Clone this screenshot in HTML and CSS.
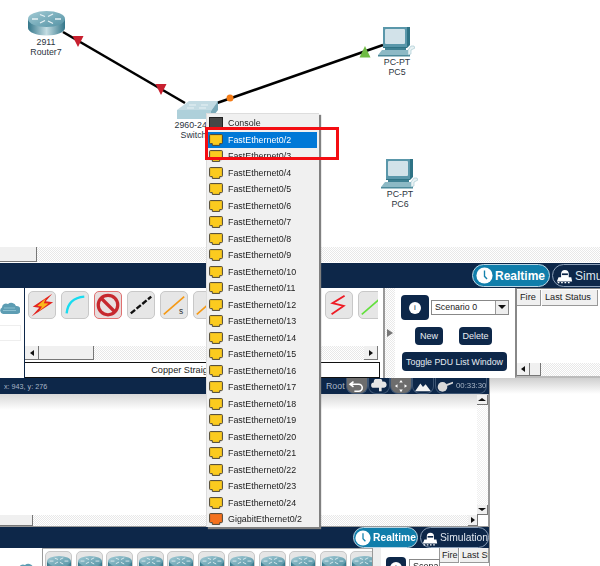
FILE: index.html
```html
<!DOCTYPE html>
<html lang="en">
<head>
<meta charset="utf-8">
<title>Packet Tracer</title>
<link rel="stylesheet" href="styles.css">
</head>
<body>
<svg class="defs" aria-hidden="true">
  <defs>
    <linearGradient id="cyl" x1="0" x2="1" y1="0" y2="0">
      <stop offset="0" stop-color="#33768a"/><stop offset=".5" stop-color="#c4dde3"/><stop offset="1" stop-color="#33768a"/>
    </linearGradient>
    <linearGradient id="disc" x1="0" x2="1" y1="0" y2="1">
      <stop offset="0" stop-color="#a3cbd5"/><stop offset="1" stop-color="#5392a4"/>
    </linearGradient>
  </defs>
  <symbol id="router" viewBox="0 0 37 25">
    <path d="M0 8v9c0 4 8 7.500 18.500 7.500S37 21 37 17V8z" fill="url(#cyl)"/>
    <ellipse cx="18.500" cy="8" rx="18.500" ry="8" fill="url(#disc)"/>
    <path d="M12 3.500l5 2M25 3l-5 2.500M12 12l5-2.500M25 12.500l-5-2.500M4 8h6M27 8h6" stroke="#e6f1f4" stroke-width="1.300" fill="none"/>
  </symbol>
  <symbol id="pc" viewBox="0 0 37 30">
    <path d="M5 0h24l3-2v20l-3 3H5z" fill="#2f7385"/>
    <path d="M30 0l2-2H8L5 0z" fill="#7fb0bd"/>
    <rect x="5" y="0" width="24" height="20" fill="#5a97aa"/>
    <rect x="7" y="2" width="20" height="15" rx="1" fill="#d2e2e9"/>
    <path d="M7 21h21v2H7z" fill="#3f8092"/>
    <path d="M4 23h26l2 5H0z" fill="#8db9c5"/>
    <path d="M0 28h32v1.500H0z" fill="#4d8a9b"/>
    <path d="M30 23l3-4 3 0 1 2-4 2 0 4-3 1z" fill="#e9f2f4" stroke="#8db9c5" stroke-width=".5"/>
  </symbol>
  <symbol id="port" viewBox="0 0 14 12">
    <path d="M.6 1.400a.8.800 0 0 1 .8-.8h11.200a.8.800 0 0 1 .8.800v7.400a.8.800 0 0 1-.8.800h-1.900v1.800H3.300V9.600H1.400a.8.800 0 0 1-.8-.8z" fill="currentColor" stroke="#4a4436" stroke-width="1"/>
  </symbol>
  <symbol id="clock" viewBox="0 0 20 20">
    <circle cx="10" cy="10" r="9.500" fill="#fff"/>
    <path d="M10 4v7l3 3" stroke="#1482ad" stroke-width="1.600" fill="none"/>
  </symbol>
  <symbol id="runner" viewBox="0 0 20 20">
    <path d="M6 8a4.500 4.500 0 0 1 9 0v4h3l1 5H1l2-5h3z" fill="#fff"/>
    <path d="M7 8.500h7" stroke="#0d2749" stroke-width="2"/>
    <path d="M2 18.500h2M6 18.500h2M10 18.500h2M14 18.500h2" stroke="#fff" stroke-width="1.500"/>
  </symbol>
  <symbol id="cloud" viewBox="0 0 20 15">
    <path d="M3 13a3.500 3.500 0 0 1-1-6.500A4 4 0 0 1 8 3a5 5 0 0 1 8 2 4 4 0 0 1 1 8z" fill="#5d9db3"/>
    <path d="M4 7h11M3 9.500h13" stroke="#8cc0d0" stroke-width="1"/>
  </symbol>
</svg>

<main class="stage">

  <section class="canvas">
    <svg class="links" viewBox="0 0 600 263" width="600" height="263" aria-hidden="true">
      <path d="M63 32L185 103" stroke="#000" stroke-width="2.600"/>
      <path d="M217 103L383 45" stroke="#000" stroke-width="2.600"/>
      <path d="M72.500 36h11l-5.500 11zM155.500 84h11l-5.500 11z" fill="#c8202f"/>
      <circle cx="230" cy="98" r="3.500" fill="#f47b16"/>
      <path d="M365 46l5.500 11.500h-11z" fill="#6fbb44"/>
    </svg>

    <figure class="node node-router">
      <svg class="icon-router" aria-hidden="true"><use href="#router"/></svg>
      <figcaption>2911<br>Router7</figcaption>
    </figure>
    <figure class="node node-switch">
      <svg class="icon-switch" viewBox="0 0 41 19" aria-hidden="true">
        <path d="M0 10L12 1h29l-7 10z" fill="#c3dbe3"/>
        <path d="M0 10h34v9H0z" fill="#aed0da"/>
        <path d="M34 11l7-10v9l-7 9z" fill="#7aa9b8"/>
        <path d="M12 5h7M24 5h7M10 8h7M22 8h7" stroke="#e8f2f5" stroke-width="1"/>
      </svg>
      <figcaption>2960-24TT<br>Switch0</figcaption>
    </figure>
    <figure class="node node-pc5">
      <svg class="icon-pc" aria-hidden="true"><use href="#pc"/></svg>
      <figcaption>PC-PT<br>PC5</figcaption>
    </figure>
    <figure class="node node-pc6">
      <svg class="icon-pc" aria-hidden="true"><use href="#pc"/></svg>
      <figcaption>PC-PT<br>PC6</figcaption>
    </figure>

    <div class="hscroll hscroll-top"><span class="thumb thumb-top"></span></div>
  </section>

  <header class="bar bar-top">
    <button class="pill pill-rt"><svg class="pill-icon" aria-hidden="true"><use href="#clock"/></svg>Realtime</button>
    <button class="pill pill-sim"><svg class="pill-icon" aria-hidden="true"><use href="#runner"/></svg>Simulation</button>
  </header>

  <section class="panels">
    <div class="types">
      <svg class="type-cloud" aria-hidden="true"><use href="#cloud"/></svg>
      <div class="type-box"></div>
    </div>
    <div class="picker">
      <div class="tools">
        <span class="tool"><svg viewBox="0 0 28 28"><path d="M25 2L4 16l7 1-8 9 23-15-8-1z" fill="#e3231f"/><path d="M18 7l-9 8 5 .5-3 5 10-8-5-.5z" fill="#fbb81c"/></svg></span>
        <span class="tool"><svg viewBox="0 0 28 28"><path d="M5 23C6 12 12 6 24 5" stroke="#18dcf0" stroke-width="2.600" fill="none"/></svg></span>
        <span class="tool tool-on"><svg viewBox="0 0 28 28"><circle cx="14" cy="14" r="10.500" fill="#e8e0e0" stroke="#c7282e" stroke-width="3.500"/><path d="M7 7l14 14" stroke="#c7282e" stroke-width="3.500"/></svg></span>
        <span class="tool"><svg viewBox="0 0 28 28"><path d="M3 23L25 5" stroke="#111" stroke-width="2.600" stroke-dasharray="6 2"/></svg></span>
        <span class="tool"><svg viewBox="0 0 28 28"><path d="M3 24L25 5" stroke="#f59a16" stroke-width="1.800"/><text class="tool-s" x="19.500" y="24">s</text></svg></span>
        <span class="tool"><svg viewBox="0 0 28 28"><path d="M3 24L25 5" stroke="#f59a16" stroke-width="1.800"/></svg></span>
        <span class="tool"></span>
        <span class="tool"></span>
        <span class="tool"></span>
        <span class="tool"><svg viewBox="0 0 28 28"><path d="M20 4L7 12l12 3-13 9" stroke="#ee1c25" stroke-width="2" fill="none"/></svg></span>
        <span class="tool"><svg viewBox="0 0 28 28"><path d="M3 24L25 5" stroke="#62e03c" stroke-width="1.800"/></svg></span>
      </div>
      <div class="hscroll hscroll-tools">
        <span class="arrow arrow-left"></span>
        <span class="thumb thumb-tools"></span>
        <span class="arrow arrow-right arrow-end"></span>
      </div>
      <div class="tool-name">Copper Straight-Through</div>
    </div>
    <div class="collapse"><span class="collapse-tri"></span></div>
    <div class="scenario">
      <div class="scenario-top">
        <span class="info"><i>i</i></span>
        <span class="select">Scenario 0<span class="select-btn"></span></span>
      </div>
      <div class="scenario-btns">
        <button class="navy-btn btn-new">New</button>
        <button class="navy-btn btn-del">Delete</button>
      </div>
      <button class="navy-btn btn-toggle">Toggle PDU List Window</button>
    </div>
    <div class="pdu">
      <div class="pdu-head"><span class="th th-fire">Fire</span><span class="th th-status">Last Status</span></div>
      <div class="hscroll hscroll-pdu"><span class="arrow arrow-left"></span><span class="thumb thumb-pdu"></span></div>
    </div>
  </section>

  <div class="status-row">
    <footer class="status">
      <span class="coords">x: 943, y: 276</span>
      <span class="root">Root</span>
      <span class="st-btn st-grey"><svg viewBox="0 0 22 16"><path d="M7 3L3 6l4 3M3 6h10a3.500 3.500 0 0 1 0 8H8" stroke="#fff" stroke-width="1.800" fill="none"/></svg></span>
      <span class="st-btn"><svg viewBox="0 0 22 16"><path d="M5 10a3 3 0 0 1 0-6 5 5 0 0 1 10-1 3.500 3.500 0 0 1 2 7h-3v4h-3v-4z" fill="#e6e6e6"/></svg></span>
      <span class="st-btn st-grey"><svg viewBox="0 0 22 16"><path d="M11 1l2 3H9zM11 15l-2-3h4zM4 8l3-2v4zM18 8l-3 2V6z" fill="#fff"/></svg></span>
      <span class="st-btn"><svg viewBox="0 0 22 16"><path d="M2 14l6-9 3 4 3-3 6 8z" fill="#f2f2f2"/></svg></span>
      <span class="st-btn st-clock"><svg class="st-bulb" viewBox="0 0 20 16"><circle cx="6" cy="9" r="5.500" fill="#d9d9d9"/><path d="M10 6l8-3v2l-7 3z" fill="#d9d9d9"/></svg>00:33:30</span>
    </footer>
    <div class="shade"></div>
  </div>

  <section class="canvas2">
    <div class="canvas2-main">
      <div class="vscroll"><span class="arrow-box arrow-up"></span><span class="arrow-box arrow-down"></span></div>
    </div>
    <div class="hscroll hscroll-low"><span class="thumb thumb-low"></span><span class="arrow arrow-right arrow-low"></span></div>
  </section>

  <header class="bar bar-low">
    <button class="pill pill-rt pill-small"><svg class="pill-icon" aria-hidden="true"><use href="#clock"/></svg>Realtime</button>
    <button class="pill pill-sim pill-small"><svg class="pill-icon" aria-hidden="true"><use href="#runner"/></svg>Simulation</button>
  </header>

  <section class="panels-low">
    <div class="types-low">
      <svg class="type-cloud-low" aria-hidden="true"><use href="#cloud"/></svg>
    </div>
    <div class="devices">
      <span class="device"><svg aria-hidden="true"><use href="#router"/></svg></span>
      <span class="device"><svg aria-hidden="true"><use href="#router"/></svg></span>
      <span class="device"><svg aria-hidden="true"><use href="#router"/></svg></span>
      <span class="device"><svg aria-hidden="true"><use href="#router"/></svg></span>
      <span class="device"><svg aria-hidden="true"><use href="#router"/></svg></span>
      <span class="device"><svg aria-hidden="true"><use href="#router"/></svg></span>
      <span class="device"><svg aria-hidden="true"><use href="#router"/></svg></span>
      <span class="device"><svg aria-hidden="true"><use href="#router"/></svg></span>
      <span class="device"><svg aria-hidden="true"><use href="#router"/></svg></span>
      <span class="device"><svg aria-hidden="true"><use href="#router"/></svg></span>
      <span class="device"><svg aria-hidden="true"><use href="#router"/></svg></span>
    </div>
    <div class="collapse-low"></div>
    <div class="scenario-low">
      <span class="info info-low"><i>i</i></span>
      <span class="select select-low">Scenario 0</span>
    </div>
    <div class="pdu-low"><span class="th th-fire-low">Fire</span><span class="th th-status-low">Last Status</span></div>
    <div class="low-rest"></div>
  </section>

  <nav class="menu">
    <div class="item"><span class="console"></span>Console</div>
    <div class="item item-on"><svg class="port" aria-hidden="true"><use href="#port"/></svg>FastEthernet0/2</div>
    <div class="item"><svg class="port" aria-hidden="true"><use href="#port"/></svg>FastEthernet0/3</div>
    <div class="item"><svg class="port" aria-hidden="true"><use href="#port"/></svg>FastEthernet0/4</div>
    <div class="item"><svg class="port" aria-hidden="true"><use href="#port"/></svg>FastEthernet0/5</div>
    <div class="item"><svg class="port" aria-hidden="true"><use href="#port"/></svg>FastEthernet0/6</div>
    <div class="item"><svg class="port" aria-hidden="true"><use href="#port"/></svg>FastEthernet0/7</div>
    <div class="item"><svg class="port" aria-hidden="true"><use href="#port"/></svg>FastEthernet0/8</div>
    <div class="item"><svg class="port" aria-hidden="true"><use href="#port"/></svg>FastEthernet0/9</div>
    <div class="item"><svg class="port" aria-hidden="true"><use href="#port"/></svg>FastEthernet0/10</div>
    <div class="item"><svg class="port" aria-hidden="true"><use href="#port"/></svg>FastEthernet0/11</div>
    <div class="item"><svg class="port" aria-hidden="true"><use href="#port"/></svg>FastEthernet0/12</div>
    <div class="item"><svg class="port" aria-hidden="true"><use href="#port"/></svg>FastEthernet0/13</div>
    <div class="item"><svg class="port" aria-hidden="true"><use href="#port"/></svg>FastEthernet0/14</div>
    <div class="item"><svg class="port" aria-hidden="true"><use href="#port"/></svg>FastEthernet0/15</div>
    <div class="item"><svg class="port" aria-hidden="true"><use href="#port"/></svg>FastEthernet0/16</div>
    <div class="item"><svg class="port" aria-hidden="true"><use href="#port"/></svg>FastEthernet0/17</div>
    <div class="item"><svg class="port" aria-hidden="true"><use href="#port"/></svg>FastEthernet0/18</div>
    <div class="item"><svg class="port" aria-hidden="true"><use href="#port"/></svg>FastEthernet0/19</div>
    <div class="item"><svg class="port" aria-hidden="true"><use href="#port"/></svg>FastEthernet0/20</div>
    <div class="item"><svg class="port" aria-hidden="true"><use href="#port"/></svg>FastEthernet0/21</div>
    <div class="item"><svg class="port" aria-hidden="true"><use href="#port"/></svg>FastEthernet0/22</div>
    <div class="item"><svg class="port" aria-hidden="true"><use href="#port"/></svg>FastEthernet0/23</div>
    <div class="item"><svg class="port" aria-hidden="true"><use href="#port"/></svg>FastEthernet0/24</div>
    <div class="item"><svg class="port port-giga" aria-hidden="true"><use href="#port"/></svg>GigabitEthernet0/2</div>
  </nav>

  <div class="callout"></div>
</main>
</body>
</html>
```
FILE: styles.css
```css
* { box-sizing: border-box; }
html, body { margin: 0; padding: 0; background: #fff; }
body { width: 600px; height: 566px; overflow: hidden; font-family: "Liberation Sans", Arial, sans-serif; color: #222; }
.defs { position: absolute; width: 0; height: 0; }
button { font-family: inherit; border: 0; padding: 0; cursor: default; }

.stage {
  position: relative;
  width: 600px;
  height: 566px;
  overflow: hidden;
  display: grid;
  grid-template-rows: 263px 25px 90px 16px 133px 21px 18px;
  filter: blur(.4px);
}

/* top canvas */
.canvas { position: relative; display: flex; flex-direction: column; justify-content: flex-end; padding-bottom: 1px; background: #fff; }
.links { position: absolute; left: 0; top: 0; }
.node { position: absolute; margin: 0; display: flex; flex-direction: column; align-items: center; width: 60px; }
.node figcaption { font-size: 8.800px; line-height: 10px; text-align: center; color: #2b3440; white-space: nowrap; }
.node-router { left: 16px; top: 11px; }
.icon-router { width: 37px; height: 25px; margin-bottom: 1px; }
.node-switch { left: 166px; top: 100px; }
.icon-switch { width: 41px; height: 19px; margin-left: 3px; margin-bottom: 1px; }
.node-pc5 { left: 367px; top: 27px; }
.node-pc6 { left: 370px; top: 159px; }
.icon-pc { width: 37px; height: 30px; margin-left: -2px; overflow: visible; }

/* scrollbars */
.hscroll {
  display: flex;
  align-items: stretch;
  background: repeating-conic-gradient(#e8e8e8 0 25%, #fff 0 50%) 0 0 / 2px 2px;
}
.hscroll-top { height: 15px; }
.thumb { display: block; background: #f0f0f0; border-right: 1px solid #777; border-bottom: 1px solid #777; }
.thumb-top { width: 37px; }
.arrow { position: relative; display: block; width: 13px; background: #f0f0f0; border-right: 1px solid #777; border-bottom: 1px solid #777; }
.arrow-left::after, .arrow-right::after {
  content: ""; position: absolute; top: 50%; left: 50%; margin: -3px 0 0 -2px;
  border-top: 3px solid transparent; border-bottom: 3px solid transparent;
}
.arrow-left::after { border-right: 4px solid #111; }
.arrow-right::after { border-left: 4px solid #111; }
.arrow-end { margin-left: auto; }

/* navy bars */
.bar { display: flex; align-items: center; background: #0d2749; }
.bar-top { padding-left: 472px; gap: 2px; width: 640px; }
.bar-low { width: 490px; padding-left: 353px; gap: 2px; border-right: 1px solid #999; }
.pill {
  flex: none;
  display: flex;
  align-items: center;
  gap: 2px;
  height: 23px;
  border-radius: 12px;
  padding-left: 3px;
  color: #fff;
  font-size: 12px;
  white-space: nowrap;
}
.pill-rt { width: 78px; background: #107eab; border: 1px solid #bcd6e4; font-weight: bold; }
.pill-sim { width: 110px; background: #0d2749; border: 1px solid #8ca0b8; color: #dfe6ee; }
.pill-icon { width: 17px; height: 17px; flex: none; }
.pill-small { font-size: 10.300px; height: 21px; gap: 2px; padding-left: 1px; }
.pill-small.pill-rt { width: 65px; }
.pill-small.pill-sim { width: 69px; }
.pill-small .pill-icon { width: 16px; height: 16px; }

/* panels */
.panels { display: flex; background: #fff; }
.types { position: relative; flex: none; width: 24px; padding-top: 13px; }
.type-cloud { display: block; width: 20px; height: 15px; }
.type-box { height: 16px; margin-top: 9px; margin-right: 3px; border: 1px solid #eee; border-left: 0; }
.picker { flex: none; width: 359px; display: flex; flex-direction: column; border-left: 1px solid #0d2749; }
.tools { flex: none; height: 58px; margin-right: 5px; padding: 3px 0 0 3px; display: flex; gap: 5px; overflow: hidden; }
.tool { flex: none; display: block; width: 28px; height: 28px; border-radius: 5px; background: #e6e6e6; border: 1px solid #c8c8c8; }
.tool svg { display: block; width: 26px; height: 26px; }
.tool-on { border-color: #e07070; background: #e8dcdc; }
.tool-s { font-size: 9px; fill: #333; }
.hscroll-tools { height: 14px; margin-right: 5px; }
.hscroll-tools .arrow { width: 14px; }
.thumb-tools { width: 55px; }
.tool-name {
  height: 16px; margin: 2px 3px 0 0; border: 1px solid #111; border-width: 1px 1px 1px 0;
  font-size: 9.200px; line-height: 14px; text-align: center; color: #222; white-space: nowrap; overflow: hidden;
}
.collapse { flex: none; width: 12px; display: flex; align-items: center; padding-left: 2px; background: repeating-conic-gradient(#e9e9e9 0 25%, #fff 0 50%) 0 0 / 2px 2px; border-left: 2px solid #999; }
.collapse-tri { display: block; border-top: 4px solid transparent; border-bottom: 4px solid transparent; border-left: 6px solid #777; }
.scenario { flex: none; width: 120px; display: flex; flex-direction: column; padding: 7px 0 0 6px; }
.scenario-top { display: flex; align-items: center; gap: 2px; height: 25px; }
.info { flex: none; display: flex; align-items: center; justify-content: center; width: 28px; height: 25px; background: #0d2749; border-radius: 4px; }
.info i { display: block; width: 12px; height: 12px; border-radius: 50%; background: #fff; color: #0d2749; font-size: 8px; font-style: normal; line-height: 12px; text-align: center; }
.select { position: relative; display: block; width: 78px; height: 15px; padding-left: 3px; border: 1px solid #888; font-size: 8.800px; line-height: 13px; color: #222; white-space: nowrap; }
.select-btn { position: absolute; right: 0; top: 0; width: 13px; height: 13px; background: #eee; border-left: 1px solid #999; }
.select-btn::after { content: ""; position: absolute; left: 2px; top: 4px; border-left: 4px solid transparent; border-right: 4px solid transparent; border-top: 4px solid #111; }
.scenario-btns { display: flex; gap: 16px; padding-left: 14px; margin-top: 7px; }
.navy-btn { height: 18px; border-radius: 4px; background: #0d2749; color: #e8edf3; font-size: 9px; white-space: nowrap; }
.btn-new { width: 28px; }
.btn-del { width: 33px; }
.btn-toggle { width: 105px; height: 19px; margin: 7px 0 0 1px; font-size: 8.800px; }
.pdu { flex: 1; display: flex; flex-direction: column; justify-content: space-between; border-left: 2px solid #888; border-top: 1px solid #888; border-bottom: 2px solid #bbb; background: #fff; padding-top: 1px; }
.pdu-head { display: flex; gap: 1px; }
.th { display: block; height: 16px; background: #f0f0f0; border-right: 1px solid #999; border-bottom: 1px solid #999; font-size: 9.200px; line-height: 15px; padding-left: 3px; white-space: nowrap; overflow: hidden; }
.th-fire { width: 24px; }
.th-status { width: 56px; }
.hscroll-pdu { height: 13px; }
.thumb-pdu { width: 11px; }

/* status */
.status-row { display: flex; }
.status { flex: none; width: 490px; display: flex; align-items: center; background: #0d2749; padding-left: 4px; color: #a9b6c6; font-size: 8.800px; border-right: 1px solid #999; }
.coords { width: 322px; white-space: nowrap; font-size: 7.200px; }
.root { width: 20px; }
.st-btn { flex: none; display: flex; align-items: center; justify-content: center; width: 22px; height: 16px; border-radius: 0 0 8px 8px; border: 1px solid #3d5573; border-top: 0; }
.st-btn svg { width: 20px; height: 14px; }
.st-grey { background: #6d6d6d; }
.st-clock { width: 52px; margin-left: 1px; justify-content: flex-start; gap: 0; font-size: 7.800px; }
.st-clock svg.st-bulb { width: 20px; flex: none; }
.shade { flex: 1; background: linear-gradient(#cfcfcf, #fff); }

/* lower window */
.canvas2 { width: 490px; display: flex; flex-direction: column; border-right: 2px solid #999; border-bottom: 1px solid #999; background: linear-gradient(#d8d8d8, #fff 16px); }
.canvas2-main { flex: 1; display: flex; justify-content: flex-end; padding-top: 1px; }
.vscroll { width: 11px; display: flex; flex-direction: column; justify-content: space-between; background: repeating-conic-gradient(#f0f0f0 0 25%, #fff 0 50%) 0 0 / 2px 2px; }
.arrow-box { position: relative; display: block; height: 10px; background: #f0f0f0; border-right: 1px solid #777; border-bottom: 1px solid #777; }
.arrow-box::after { content: ""; position: absolute; left: 1px; top: 3px; border-left: 4px solid transparent; border-right: 4px solid transparent; }
.arrow-up::after { border-bottom: 3px solid #111; }
.arrow-down::after { border-top: 3px solid #111; }
.hscroll-low { flex: none; height: 11px; margin-right: 10px; }
.thumb-low { width: 33px; }
.arrow-low { width: 10px; margin-left: auto; }

.panels-low { display: flex; background: #fff; width: 490px; overflow: hidden; border-right: 1px solid #999; }
.types-low { flex: none; width: 42px; padding: 14px 0 0 17px; }
.type-cloud-low { display: block; width: 20px; height: 15px; }
.devices { flex: none; width: 330px; display: flex; gap: 3.500px; padding: 2px 0 0 2px; overflow: hidden; border-left: 1px solid #999; border-top: 1px solid #aaa; }
.device { flex: none; display: block; width: 27px; height: 28px; padding: 3px 1px; border-radius: 5px; background: #e6e6e6; border: 1px solid #c8c8c8; }
.device svg { display: block; width: 24px; height: 18px; }
.collapse-low { flex: none; width: 9px; background: #eee; border-left: 1px solid #999; }
.scenario-low { flex: none; width: 59px; display: flex; gap: 3px; padding: 9px 0 0 5px; }
.info-low { width: 20px; height: 22px; }
.select-low { width: 40px; overflow: hidden; font-size: 9px; margin-top: 2px; }
.pdu-low { flex: none; width: 50px; display: flex; gap: 1px; margin-left: -1px; }
.th-fire-low { width: 20px; height: 15px; padding-left: 2px; font-size: 9px; border-left: 1px solid #999; }
.th-status-low { width: 29px; height: 15px; padding-left: 2px; font-size: 9px; }
.low-rest { flex: 1; }

/* port menu */
.menu {
  position: absolute;
  left: 206px;
  top: 113px;
  width: 113px;
  height: 414px;
  padding: 1px 2px 0 0;
  background: #f0f0f0;
  border-top: 1px solid #ddd;
  border-left: 1px solid #ddd;
  box-shadow: 2px 2px 1px #808080;
}
.item { display: flex; align-items: center; gap: 5px; height: 16.500px; padding-left: 2px; font-size: 8.900px; color: #222; white-space: nowrap; }
.item-on { background: #0078d7; color: #fff; }
.port { flex: none; width: 14px; height: 12px; color: #fbcb1f; }
.port-giga { color: #f4711e; }
.console { flex: none; width: 14px; height: 12px; background: #474747; border: 1px solid #222; }

.callout { position: absolute; left: 205px; top: 127px; width: 134px; height: 33px; border: 3px solid #f40d12; }
```
